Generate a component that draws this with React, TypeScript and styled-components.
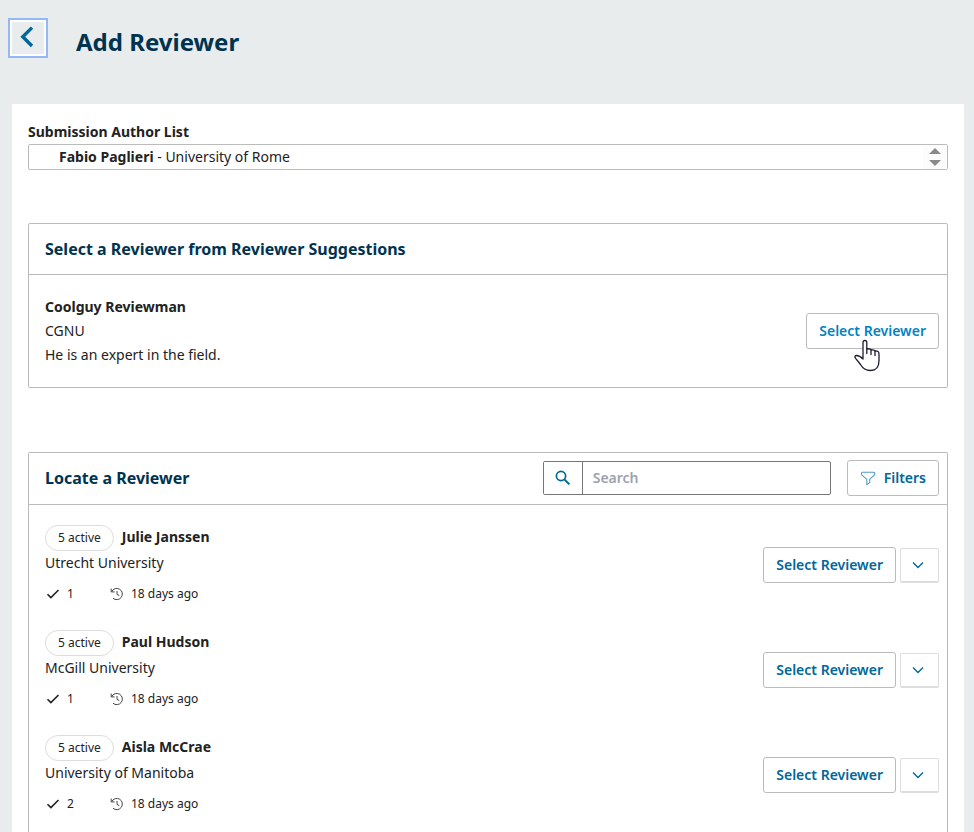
import React from "react";
import styled, { createGlobalStyle } from "styled-components";

const color = {
  page: "#e8ecec",
  sheet: "#ffffff",
  heading: "#003350",
  text: "#222222",
  link: "#006798",
  linkHover: "#0084c2",
  line: "#bbbbbb",
  lineSoft: "#dddddd",
  lineStrong: "#777777",
};

const GlobalStyle = createGlobalStyle`
  *, *::before, *::after { box-sizing: border-box; }
  body {
    margin: 0;
    background: ${color.page};
    color: ${color.text};
    font: 14px/24px "Noto Sans", "Open Sans", sans-serif;
  }
  button, input { font: inherit; }
  h1, h2, p, ul { margin: 0; padding: 0; }
  ul { list-style: none; }
`;

const Page = styled.div`
  display: flex;
  flex-direction: column;
  min-height: 100vh;
`;

const TopBar = styled.header`
  display: flex;
  align-items: flex-start;
  gap: 28px;
  padding: 18px 8px 46px;
`;

const BackButton = styled.button`
  display: grid;
  place-items: center;
  width: 40px;
  height: 40px;
  padding: 0 2px 2px 0;
  background: ${color.page};
  border: 2px solid #94b8f4;
  box-shadow: inset 0 0 0 2px #fff;
  color: ${color.link};
  cursor: pointer;
`;

const Title = styled.h1`
  padding-top: 8px;
  color: ${color.heading};
  font-size: 24px;
  line-height: 32px;
  font-weight: 700;
`;

const Sheet = styled.main`
  flex: 1;
  display: flex;
  flex-direction: column;
  margin: 0 10px 0 12px;
  padding: 16px 16px 0;
  background: ${color.sheet};
`;

const SectionLabel = styled.h2`
  font-size: 14px;
  line-height: 24px;
  font-weight: 700;
`;

const AuthorBox = styled.div`
  display: flex;
  justify-content: space-between;
  height: 26px;
  margin-bottom: 53px;
  border: 1px solid ${color.line};
  border-radius: 2px;
`;

const AuthorList = styled.ul`
  padding-left: 30px;
`;

const Strong = styled.strong`
  font-weight: 700;
`;

const Stepper = styled.div`
  display: grid;
  grid-template-rows: 1fr 1fr;
  width: 24px;
  background: #fcfcfc;
`;

const StepButton = styled.button`
  display: grid;
  place-items: center;
  padding: 0;
  border: 0;
  background: none;
  color: #8a8a8a;
`;

const Panel = styled.section<{ $open?: boolean }>`
  flex: ${(p) => (p.$open ? "1" : "none")};
  margin-bottom: ${(p) => (p.$open ? "0" : "64px")};
  border: 1px solid ${color.line};
  border-bottom-width: ${(p) => (p.$open ? "0" : "1px")};
  border-radius: ${(p) => (p.$open ? "2px 2px 0 0" : "2px")};
`;

const PanelHeader = styled.div`
  display: flex;
  align-items: center;
  gap: 16px;
  min-height: 51px;
  padding: 7px 8px 8px 16px;
  border-bottom: 1px solid ${color.line};
`;

const PanelTitle = styled.h2`
  flex: 1;
  color: ${color.heading};
  font-size: 16px;
  line-height: 24px;
  font-weight: 700;
`;

const Suggestion = styled.div`
  display: flex;
  align-items: center;
  justify-content: space-between;
  padding: 20px 8px 20px 16px;
`;

const Button = styled.button<{ $hovered?: boolean }>`
  position: relative;
  display: inline-flex;
  align-items: center;
  justify-content: center;
  gap: 8px;
  height: 36px;
  padding: 0 12px;
  background: #fff;
  border: 1px solid ${color.line};
  border-radius: 3px;
  color: ${(p) => (p.$hovered ? color.linkHover : color.link)};
  font-weight: 600;
  white-space: nowrap;
  cursor: pointer;
`;

const Pointer = styled.svg`
  position: absolute;
  top: 25px;
  left: 47px;
  pointer-events: none;
`;

const SearchBox = styled.form`
  display: flex;
  width: 288px;
  height: 34px;
  border: 1px solid ${color.lineStrong};
  border-radius: 2px;
`;

const SearchButton = styled.button`
  display: grid;
  place-items: center;
  width: 39px;
  padding: 0;
  background: #fff;
  border: 0;
  border-right: 1px solid ${color.lineStrong};
  color: ${color.link};
`;

const SearchInput = styled.input`
  flex: 1;
  min-width: 0;
  padding: 0 10px;
  border: 0;
  background: transparent;
  color: ${color.text};
  font-weight: 600;
  outline: none;
  &::placeholder { color: #9ca3af; opacity: 1; }
`;

const ReviewerList = styled.ul`
  padding: 8px 8px 0 16px;
`;

const ReviewerRow = styled.li`
  display: flex;
  align-items: center;
  justify-content: space-between;
  padding: 12px 0 14px;
`;

const NameLine = styled.div`
  display: flex;
  align-items: flex-start;
  gap: 8px;
`;

const Pill = styled.span`
  padding: 0 12px;
  border: 1px solid ${color.lineSoft};
  border-radius: 13px;
  font-size: 12px;
  line-height: 24px;
`;

const Meta = styled.div`
  display: flex;
  align-items: center;
  padding-top: 9px;
  font-size: 12px;
  line-height: 20px;
`;

const MetaItem = styled.span`
  display: inline-flex;
  align-items: center;
  gap: 6px;
  min-width: 64px;
`;

const Actions = styled.div`
  display: flex;
  align-items: flex-end;
  gap: 4px;
`;

const ExpandButton = styled.button`
  display: grid;
  place-items: center;
  width: 39px;
  height: 35px;
  padding: 0 4px 0 0;
  background: #fff;
  border: 1px solid ${color.lineSoft};
  border-bottom-width: 2px;
  border-radius: 2px;
  color: ${color.link};
  cursor: pointer;
`;

const BackIcon = () => (
  <svg width="16" height="22" viewBox="0 0 16 22" fill="none" stroke="currentColor" strokeWidth="3.4" aria-hidden="true">
    <path d="M13 1.600 3.800 10.800l9.200 9.200" />
  </svg>
);

const Triangle = ({ down }: { down?: boolean }) => (
  <svg width="12" height="6" viewBox="0 0 12 6" fill="currentColor" aria-hidden="true">
    <path d={down ? "M0 0h12L6 6z" : "M0 6h12L6 0z"} />
  </svg>
);

const SearchIcon = () => (
  <svg width="16" height="16" viewBox="0 0 16 16" fill="none" stroke="currentColor" strokeWidth="1.7" aria-hidden="true">
    <circle cx="6" cy="6" r="4.6" />
    <path d="m9.400 9.400 5 5" strokeWidth="2" />
  </svg>
);

const FilterIcon = () => (
  <svg width="16" height="16" viewBox="0 0 16 16" fill="none" stroke="#4f9cc2" strokeWidth="1.1" strokeLinejoin="round" aria-hidden="true">
    <path d="M2.200 2.300h11.600q1 0 .9 1v.8q0 .6-.5 1.100L9.700 9.400v3.200l-2.900 2V9.400L2 5.200q-.5-.5-.5-1.100v-.8q0-1 .7-1z" />
  </svg>
);

const ChevronIcon = () => (
  <svg width="12" height="8" viewBox="0 0 12 8" fill="none" stroke="currentColor" strokeWidth="1.4" aria-hidden="true">
    <path d="m1 1.500 5 5 5-5" />
  </svg>
);

const CheckIcon = () => (
  <svg width="16" height="16" viewBox="0 0 16 16" fill="none" stroke="currentColor" strokeWidth="1.6" aria-hidden="true">
    <path d="m2.500 8.200 3.400 3.400 7.600-7.600" />
  </svg>
);

const HistoryIcon = () => (
  <svg width="16" height="16" viewBox="-1 -1 16 16" fill="none" stroke="#444" strokeWidth="1" aria-hidden="true">
    <path d="M1.700 4.600A5.600 5.600 0 1 1 3 11.200M1.200 1.600v3.300h3.400M7 4v3.400l2.300 1.200" />
  </svg>
);

const HandPointer = () => (
  <Pointer width="26" height="33" viewBox="0 0 26 33" fill="#fff" stroke="#1c1c2e" strokeWidth="1.3" strokeLinejoin="round" strokeLinecap="round" aria-hidden="true">
    <path d="M9 20V3.400Q9 1.500 10.900 1.500T12.800 3.400V10q3.600-.8 4.200 1 3.300-.7 4 1 4-.4 4 3v6.500c0 6.500-3 10-8.500 10-5.500 0-8-2.500-10-6L1.600 19.300C.3 17.500 1 16.500 2.600 16.500c2.600 0 4.400 1.500 6.400 3.500z" />
    <path d="M12.800 10v4.500M17 11v4.500M21 12v4.500" fill="none" />
  </Pointer>
);

const reviewers = [
  { name: "Julie Janssen", org: "Utrecht University", done: 1 },
  { name: "Paul Hudson", org: "McGill University", done: 1 },
  { name: "Aisla McCrae", org: "University of Manitoba", done: 2 },
];

export default function App() {
  return (
    <Page>
      <GlobalStyle />
      <TopBar>
        <BackButton type="button" aria-label="Back"><BackIcon /></BackButton>
        <Title>Add Reviewer</Title>
      </TopBar>
      <Sheet>
        <SectionLabel id="authors">Submission Author List</SectionLabel>
        <AuthorBox>
          <AuthorList aria-labelledby="authors">
            <li><Strong>Fabio Paglieri</Strong> - University of Rome</li>
          </AuthorList>
          <Stepper>
            <StepButton type="button" aria-label="Scroll up"><Triangle /></StepButton>
            <StepButton type="button" aria-label="Scroll down"><Triangle down /></StepButton>
          </Stepper>
        </AuthorBox>

        <Panel>
          <PanelHeader>
            <PanelTitle>Select a Reviewer from Reviewer Suggestions</PanelTitle>
          </PanelHeader>
          <Suggestion>
            <div>
              <Strong>Coolguy Reviewman</Strong>
              <p>CGNU</p>
              <p>He is an expert in the field.</p>
            </div>
            <Button type="button" $hovered>
              Select Reviewer
              <HandPointer />
            </Button>
          </Suggestion>
        </Panel>

        <Panel $open>
          <PanelHeader>
            <PanelTitle>Locate a Reviewer</PanelTitle>
            <SearchBox role="search" onSubmit={(e) => e.preventDefault()}>
              <SearchButton type="submit" aria-label="Submit search"><SearchIcon /></SearchButton>
              <SearchInput type="text" placeholder="Search" aria-label="Search" />
            </SearchBox>
            <Button type="button"><FilterIcon />Filters</Button>
          </PanelHeader>
          <ReviewerList>
            {reviewers.map((r) => (
              <ReviewerRow key={r.name}>
                <div>
                  <NameLine>
                    <Pill>5 active</Pill>
                    <Strong>{r.name}</Strong>
                  </NameLine>
                  <p>{r.org}</p>
                  <Meta>
                    <MetaItem><CheckIcon />{r.done}</MetaItem>
                    <MetaItem><HistoryIcon />18 days ago</MetaItem>
                  </Meta>
                </div>
                <Actions>
                  <Button type="button">Select Reviewer</Button>
                  <ExpandButton type="button" aria-label={`Show more about ${r.name}`}><ChevronIcon /></ExpandButton>
                </Actions>
              </ReviewerRow>
            ))}
          </ReviewerList>
        </Panel>
      </Sheet>
    </Page>
  );
}
